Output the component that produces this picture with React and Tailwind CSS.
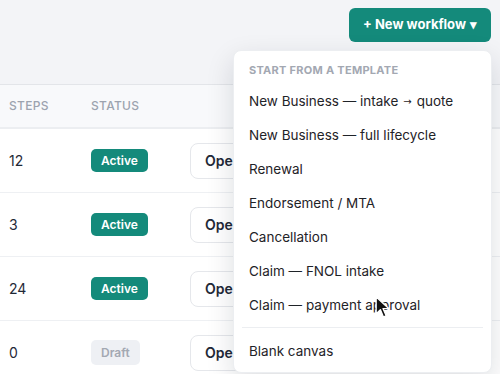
const rows = [
  { steps: 12, status: "Active" },
  { steps: 3, status: "Active" },
  { steps: 24, status: "Active" },
  { steps: 0, status: "Draft" },
];

const templates = [
  "New Business — intake",
  "New Business — full lifecycle",
  "Renewal",
  "Endorsement / MTA",
  "Cancellation",
  "Claim — FNOL intake",
  "Claim — payment approval",
];

function StatusBadge({ status }) {
  if (status === "Draft") {
    return (
      <span className="inline-flex h-[25px] items-center rounded-[5px] bg-[#eef0f4] px-[10px] text-[12px] font-semibold text-[#a3a8b2]">
        Draft
      </span>
    );
  }
  return (
    <span className="inline-flex h-[23px] items-center rounded-[5px] bg-[#148a7b] px-[10px] text-[12px] font-semibold text-white">
      {status}
    </span>
  );
}

function Cursor() {
  return (
    <svg
      className="absolute left-[375px] top-[296px]"
      width="17"
      height="23"
      viewBox="0 0 16 22"
    >
      <path
        d="M1 1 L1 17 L5 13 L8 20 L10.5 19 L7.5 12 L13 12 Z"
        fill="#111"
        stroke="#fff"
        strokeWidth="1.2"
        strokeLinejoin="round"
      />
    </svg>
  );
}

export default function App() {
  return (
    <div
      className="relative h-[374px] w-[500px] overflow-hidden bg-[#f3f4f7]"
      style={{ fontFamily: "Inter, 'Noto Sans', sans-serif" }}
    >
      {/* top bar */}
      <div className="flex h-[84px] justify-end pr-[9px] pt-[8px]">
        <button
          type="button"
          className="flex h-[34px] w-[142px] items-center justify-center gap-[4px] rounded-[6px] bg-[#148a7b] text-[13px] font-bold text-white"
        >
          + New workflow <span className="text-[13px]">▾</span>
        </button>
      </div>

      {/* table */}
      <div className="border-t border-[#e3e5e9] bg-white">
        <div className="grid h-[44px] grid-cols-[82px_99px_1fr] items-center border-b-2 border-[#eceef1] bg-[#f8f9fb] pl-[9px] text-[12px] font-medium uppercase tracking-wide text-[#9ca3af]">
          <span>Steps</span>
          <span>Status</span>
          <span />
        </div>
        {rows.map((row, i) => (
          <div
            key={i}
            className="grid h-[64px] grid-cols-[82px_99px_1fr] items-center border-b border-[#eef0f3] pl-[9px] text-[14px] text-[#1f2937]"
          >
            <span>{row.steps}</span>
            <span>
              <StatusBadge status={row.status} />
            </span>
            <span>
              <button
                type="button"
                className="h-[36px] w-[90px] rounded-[8px] border border-[#e5e7eb] bg-white pl-[14px] text-left text-[14px] font-semibold text-[#1f2937]"
              >
                Open
              </button>
            </span>
          </div>
        ))}
      </div>

      {/* dropdown menu */}
      <div className="absolute left-[233px] top-[50px] w-[259px] rounded-[8px] border border-[#eceef1] bg-white pb-[4px] pt-[9px] shadow-[0_10px_28px_rgba(15,23,42,0.14)]">
        <div className="flex h-[20px] items-center px-[15px] text-[11px] font-bold uppercase tracking-wide text-[#a3a8b2]">
          Start from a template
        </div>
        <div className="mt-[4px]">
          {templates.map((t, i) => (
            <div
              key={t}
              className="flex h-[34px] items-center px-[15px] text-[13.5px] text-[#1f2328]"
            >
              {t}
              {i === 0 ? (
                <>
                  <span
                    className="mx-[5px] text-[10px]"
                    style={{ fontFamily: "'DejaVu Sans', sans-serif" }}
                  >
                    →
                  </span>
                  quote
                </>
              ) : null}
            </div>
          ))}
        </div>
        <div className="mx-2 mb-[6px] mt-[5px] border-t border-[#eceef1]" />
        <div className="flex h-[34px] items-center px-[15px] text-[13.5px] text-[#1f2328]">
          Blank canvas
        </div>
      </div>

      <Cursor />
    </div>
  );
}
